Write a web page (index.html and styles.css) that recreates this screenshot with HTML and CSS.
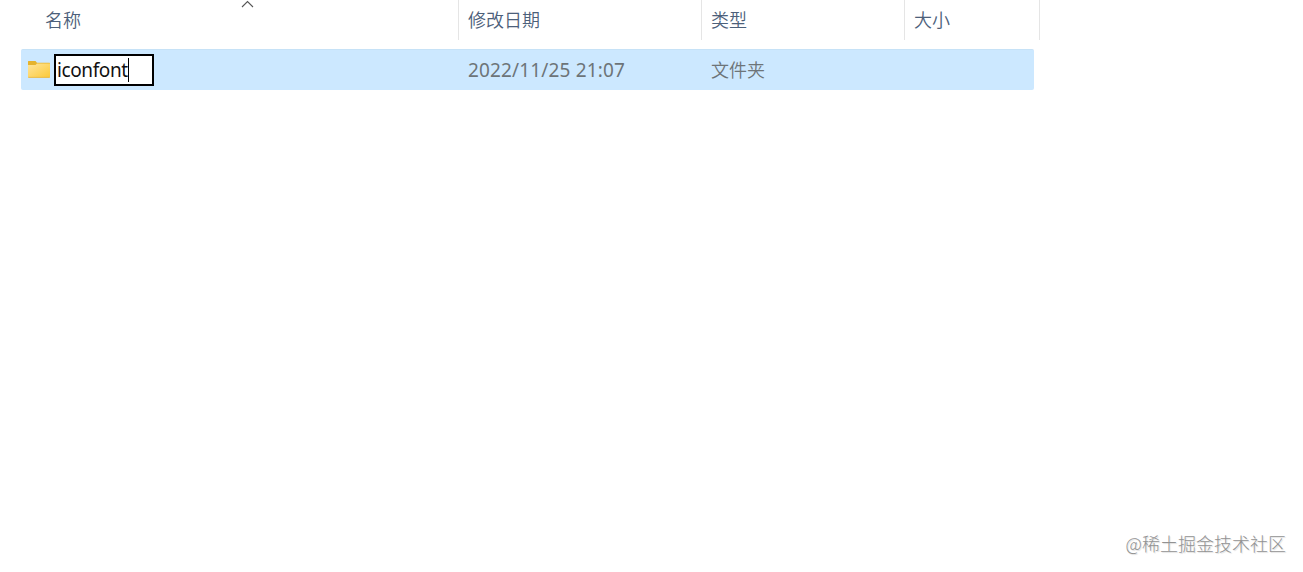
FILE: index.html
```html
<!DOCTYPE html>
<html lang="zh-CN">

<head>
    <meta charset="UTF-8">
    <meta name="viewport" content="width=device-width, initial-scale=1.0">
    <title>文件列表</title>
    <link rel="stylesheet" href="styles.css">
</head>

<body>
    <div class="list">
        <div class="head">
            <div class="cell">名称
                <svg class="sort" width="13" height="8" viewBox="0 0 13 8">
                    <path d="M1 7L6.5 1.5L12 7" fill="none" stroke="#555" stroke-width="1.1" />
                </svg>
            </div>
            <div class="cell">修改日期</div>
            <div class="cell">类型</div>
            <div class="cell">大小</div>
        </div>
        <div class="row">
            <div class="name">
                <svg class="folder" width="22" height="18" viewBox="0 0 22 18">
                    <defs>
                        <linearGradient id="yellow" x1="0" y1="0" x2="1" y2="1">
                            <stop offset="0" stop-color="#ffe59c" />
                            <stop offset="1" stop-color="#fbc938" />
                        </linearGradient>
                    </defs>
                    <path d="M0 .5Q0 0 .5 0H7.5L9 1.7H21.5Q22 1.7 22 2.2V8H0Z" fill="#e5b32c" />
                    <path d="M0 4H7.5L9 2.5H22V16.2Q22 16.5 21.5 16.5H.5Q0 16.5 0 16Z" fill="url(#yellow)" />
                    <path d="M.3 16.4H21.7" stroke="#e9b336" stroke-width=".8" />
                </svg>
                <div class="edit"><span>iconfont</span><i class="caret"></i></div>
            </div>
            <div class="date">2022/11/25 21:07</div>
            <div class="type">文件夹</div>
        </div>
    </div>
    <div class="mark">@稀土掘金技术社区</div>
</body>

</html>
```

FILE: styles.css
```css
* {
    margin: 0;
    padding: 0;
    box-sizing: border-box;
}

body {
    height: 572px;
    display: flex;
    flex-direction: column;
    justify-content: space-between;
    overflow: hidden;
    background: #fff;
    font-family: "Noto Sans", "Noto Sans CJK SC", sans-serif;
    font-size: 18px;
}

.head {
    display: grid;
    grid-template-columns: 459px 243px 203px 135px;
    height: 40px;
    color: #4c607a;
    font-family: "Noto Sans CJK SC", sans-serif;
    font-weight: 350;
}

.cell {
    position: relative;
    padding-left: 9px;
    line-height: 39px;
    border-right: 1px solid #e5e5e5;
}

.cell:first-child {
    padding-left: 45px;
}

.sort {
    position: absolute;
    left: 241px;
    top: 0;
}

.row {
    display: grid;
    grid-template-columns: 438px 243px 1fr;
    align-items: center;
    width: 1013px;
    height: 41px;
    margin: 9px 0 0 21px;
    border-radius: 2px;
    border-top: 1px solid #c6e2f7;
    background: #cce8ff;
    color: #6d7478;
}

.name {
    display: flex;
    align-items: center;
    padding-left: 7px;
}

.edit {
    display: flex;
    align-items: center;
    width: 100px;
    height: 32px;
    margin-left: 4px;
    padding-left: 1px;
    border: 2px solid #000;
    background: #fff;
    color: #111;
    font-size: 19px;
    letter-spacing: -.4px;
    line-height: 28px;
}

.caret {
    width: 1px;
    height: 24px;
    background: #000;
}

.date,
.type {
    padding-left: 9px;
    line-height: 38px;
}

.date {
    font-size: 19px;
    letter-spacing: .15px;
}

.type {
    padding-bottom: 2px;
    font-family: "Noto Sans CJK SC", sans-serif;
    font-weight: 350;
}

.mark {
    align-self: flex-end;
    margin: 0 17px 15px 0;
    color: #929292;
    font-family: "Noto Sans CJK SC", sans-serif;
    font-weight: 300;
    line-height: 27px;
    text-shadow: 1px 1px 1px #ddd;
}
```
